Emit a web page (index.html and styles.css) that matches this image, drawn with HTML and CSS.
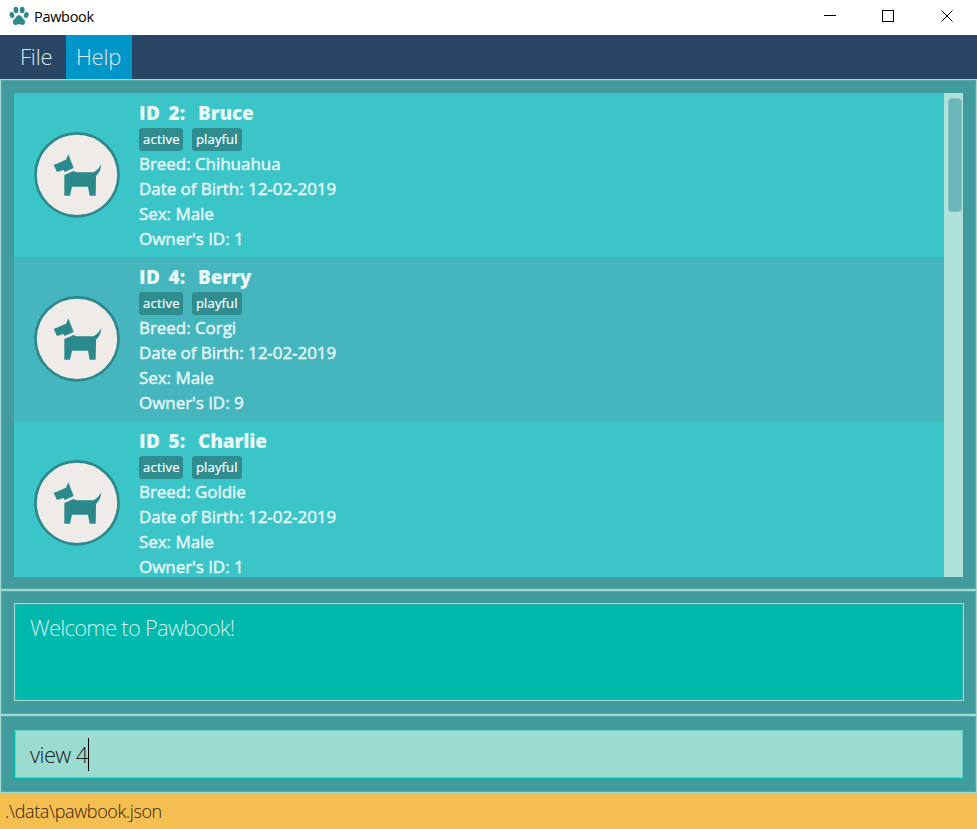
FILE: index.html
```html
<!DOCTYPE html>
<html lang="en">
<head>
<meta charset="utf-8">
<title>Pawbook</title>
<link rel="stylesheet" href="styles.css">
</head>
<body>
<svg class="defs" aria-hidden="true">
  <symbol id="dog" viewBox="0 0 258 258">
    <circle cx="129" cy="128.500" r="124.500" fill="#efebe8" stroke="#2b888b" stroke-width="8"/>
    <path fill="#2b888b" d="M59 99L96 83L103 67L119 108L92 120L89 114L69 120ZM91 129L119 117L127 121H178Q194 113 202 96Q201 117 186 132L185 191H167L162 164H114L108 191H91Z"/>
  </symbol>
</svg>
<div class="window">
  <header class="titlebar">
    <svg class="paw" viewBox="0 0 20 20" fill="#2b888b">
      <ellipse cx="7" cy="4" rx="2.400" ry="3.200"/>
      <ellipse cx="13.200" cy="4" rx="2.400" ry="3.200"/>
      <ellipse cx="2.900" cy="9" rx="2.300" ry="3" transform="rotate(-20 2.900 9)"/>
      <ellipse cx="17.300" cy="9" rx="2.300" ry="3" transform="rotate(20 17.300 9)"/>
      <path d="M10 9.300C7.500 9.300 6.900 12 5.300 13.300C3.200 15 3.500 19 6.500 19C8 19 8.500 18.300 10 18.300S12 19 13.500 19C16.500 19 16.800 15 14.700 13.300C13.100 12 12.500 9.300 10 9.300Z"/>
    </svg>
    <span class="app-name">Pawbook</span>
    <svg class="controls" width="130" height="12" viewBox="0 0 130 12" fill="none" stroke="#000">
      <path d="M0 5.500H12M58.500 .5H69.500V11.500H58.500Z" shape-rendering="crispEdges"/>
      <path d="M117.500 .5L128.500 11.500M128.500 .5L117.500 11.500"/>
    </svg>
  </header>
  <nav class="menubar"><span class="menu file">File</span><span class="menu help">Help</span></nav>
  <main class="pane list-pane">
    <div class="list">
      <div class="cards">
        <article class="card">
          <svg class="avatar"><use href="#dog"/></svg>
          <div class="info">
            <h2><span class="id">ID 2:</span><span>Bruce</span></h2>
            <div class="tags"><span class="tag active">active</span><span class="tag playful">playful</span></div>
            <p>Breed: Chihuahua</p><p>Date of Birth: 12-02-2019</p><p>Sex: Male</p><p>Owner's ID: 1</p>
          </div>
        </article>
        <article class="card alt">
          <svg class="avatar"><use href="#dog"/></svg>
          <div class="info">
            <h2><span class="id">ID 4:</span><span>Berry</span></h2>
            <div class="tags"><span class="tag active">active</span><span class="tag playful">playful</span></div>
            <p>Breed: Corgi</p><p>Date of Birth: 12-02-2019</p><p>Sex: Male</p><p>Owner's ID: 9</p>
          </div>
        </article>
        <article class="card">
          <svg class="avatar"><use href="#dog"/></svg>
          <div class="info">
            <h2><span class="id">ID 5:</span><span>Charlie</span></h2>
            <div class="tags"><span class="tag active">active</span><span class="tag playful">playful</span></div>
            <p>Breed: Goldie</p><p>Date of Birth: 12-02-2019</p><p>Sex: Male</p><p>Owner's ID: 1</p>
          </div>
        </article>
      </div>
      <div class="scrollbar"><div class="thumb"></div></div>
    </div>
  </main>
  <section class="pane result-pane"><div class="result"><span>Welcome to Pawbook!</span></div></section>
  <section class="pane command-pane"><div class="command"><span>view 4</span><i class="caret"></i></div></section>
  <footer class="status"><span>.\data\pawbook.json</span></footer>
</div>
</body>
</html>
```

FILE: styles.css
```css
* { box-sizing: border-box; }
body { margin: 0; font-family: "Open Sans", "Noto Sans", sans-serif; }
.defs { display: none; }
.window { width: 977px; height: 829px; display: flex; flex-direction: column; overflow: hidden; white-space: nowrap; }
.titlebar { height: 35px; background: #fff; display: flex; align-items: center; padding: 0 23px 3px 9px; }
.paw { width: 20px; height: 20px; margin-right: 5px; }
.app-name { font-size: 14.5px; letter-spacing: -0.3px; color: #000; }
.controls { margin-left: auto; }
.menubar { height: 44px; background: #294664; display: flex; font-size: 22px; font-weight: 300; line-height: 42px; color: #e3e8ed; }
.menu.file { width: 66px; padding-left: 20px; letter-spacing: -0.2px; }
.menu.help { width: 66px; padding-left: 10px; background: #0096c9; letter-spacing: -0.2px; }
.pane { background: #419a9c; border: 1px solid #a0dbd3; box-shadow: inset 0 0 0 1px #5aa9a9; }
.list-pane { height: 511px; padding: 13px; }
.list { height: 484px; display: flex; overflow: hidden; }
.cards { width: 930px; height: 484px; overflow: hidden; }
.card { height: 164px; background: #3cc5c9; display: flex; padding: 8px 0 0 20px; color: #e9f8f8; }
.card.alt { background: #45b6be; }
.avatar { width: 86px; height: 86px; margin: 31px 19px 0 0; }
.info { flex: 1; }
h2 { margin: 0; height: 27px; line-height: 24px; font-size: 19px; font-weight: 800; letter-spacing: -0.15px; display: flex; }
h2 .id { width: 59px; letter-spacing: 0.3px; word-spacing: 3px; }
.tags { display: flex; gap: 9px; height: 23px; }
.tag { height: 23px; line-height: 22px; border-radius: 3px; background: #2f8c8f; color: #fff; font-size: 13px; padding-left: 4px; letter-spacing: 0.15px; -webkit-text-stroke: 0.2px; }
.active { width: 44px; letter-spacing: 0.3px; }
.playful { width: 50px; }
p { margin: 0; height: 25px; line-height: 25px; font-size: 17px; letter-spacing: -0.05px; -webkit-text-stroke: 0.4px; }
.scrollbar { width: 19px; background: #aee1da; padding: 5px 1px 0 4px; }
.thumb { width: 14px; height: 114px; border-radius: 4px; background: #6ab6b8; border: 1px solid #84c3c2; }
.result-pane { height: 125px; padding: 12px 12px 12px 13px; }
.result { height: 98px; background: #00b8ab; border: 1px solid #a3dbd4; box-shadow: inset 0 0 0 1px #39aaa5; padding: 8px 15px; font-size: 22px; line-height: 30px; font-weight: 300; color: #d0efeb; }
.result span { letter-spacing: -0.75px; }
.command-pane { height: 78px; padding: 13px 12px 12px 13px; }
.command { height: 51px; background: #9cdbd0; border: 1px solid #00b9ab; border-bottom-width: 2px; box-shadow: inset 0 0 0 1px #6bd0c4; display: flex; align-items: center; padding-left: 15px; font-size: 22px; font-weight: 300; color: #14201f; }
.command span { letter-spacing: -0.6px; padding-bottom: 1px; }
.caret { width: 1px; height: 33px; background: #000; }
.status { height: 36px; background: #f5be51; padding-left: 5px; font-size: 18px; font-weight: 300; line-height: 37px; color: #2e240f; }
.status span { letter-spacing: -0.38px; }
```
